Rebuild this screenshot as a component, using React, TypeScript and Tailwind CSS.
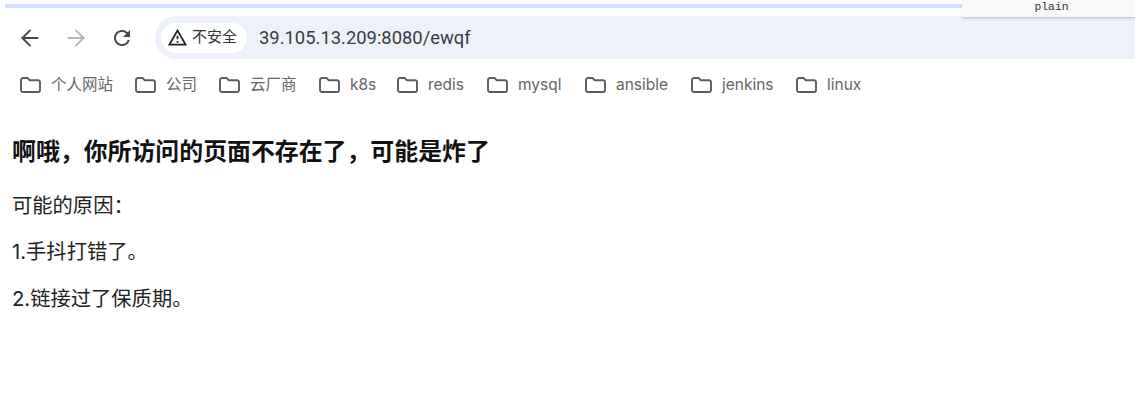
import { ArrowLeft, ArrowRight } from "lucide-react";
import { MdOutlineWarningAmber, MdRefresh } from "react-icons/md";

const bookmarks = [
  { name: "个人网站", width: "w-[115px]" },
  { name: "公司", width: "w-[84px]" },
  { name: "云厂商", width: "w-[100px]" },
  { name: "k8s", width: "w-[78px]" },
  { name: "redis", width: "w-[90px]" },
  { name: "mysql", width: "w-[98px]" },
  { name: "ansible", width: "w-[106px]" },
  { name: "jenkins", width: "w-[105px]" },
  { name: "linux", width: "w-[80px]" },
];

const font = "font-['Inter','Noto_Sans_CJK_SC',sans-serif]";

function FolderIcon() {
  return (
    <svg width="21" height="16" viewBox="0 0 21 16" fill="none" className="shrink-0">
      <path
        d="M1 3a2 2 0 0 1 2-2h4.6l2 2.2H18a2 2 0 0 1 2 2V13a2 2 0 0 1-2 2H3a2 2 0 0 1-2-2Z"
        stroke="#5c5c5c"
        strokeWidth="1.9"
        strokeLinejoin="round"
      />
    </svg>
  );
}

export default function App() {
  return (
    <div className={`relative h-[401px] w-[1135px] overflow-hidden bg-white ${font}`}>
      {/* tab strip remainder */}
      <div className="pt-1 pl-[5px] pr-[173px]">
        <div className="h-1 bg-[#d3e3fd]" />
      </div>

      <div className="relative flex h-[51px] items-center pl-[22px] pt-2">
        <ArrowLeft className="-ml-[5px] h-[26px] w-[26px] text-[#474747]" strokeWidth={1.8} />
        <ArrowRight className="ml-[20px] h-[26px] w-[26px] text-[#b5b7ba]" strokeWidth={1.8} />
        <MdRefresh className="ml-[21px] h-[24px] w-[24px] text-[#474747]" />
        <div className="ml-[21px] flex h-[43px] flex-1 items-center rounded-l-full bg-[#edf2fa] pl-[6px]">
          <div className="flex h-[30px] w-[86px] items-center rounded-full bg-white pl-[6px] text-[15px] text-[#333]">
            <MdOutlineWarningAmber className="h-[21px] w-[21px] text-[#222]" />
            <span className="ml-[4px]">不安全</span>
          </div>
          <span className="ml-[12px] font-['Roboto','Noto_Sans_CJK_SC',sans-serif] text-[18.4px] text-[#3a3c40]">
            39.105.13.209:8080/ewqf
          </span>
        </div>
      </div>

      <div className="flex h-[38px] items-center pl-[20px] pt-[14px]">
        {bookmarks.map((b) => (
          <div key={b.name} className={`flex items-center ${b.width}`}>
            <FolderIcon />
            <span className="ml-[10px] whitespace-nowrap text-[15.5px] text-[#666]">{b.name}</span>
          </div>
        ))}
      </div>

      <div className="pl-[12px] pt-[39px] text-[#222]">
        <h1 className="text-[23.9px] leading-[32px] font-bold text-[#111]">啊哦，你所访问的页面不存在了，可能是炸了</h1>
        <p className="mt-[25px] text-[20.3px] leading-[26px]">可能的原因：</p>
        <p className="mt-[20px] text-[20.3px] leading-[26px]">1.手抖打错了。</p>
        <p className="mt-[21px] text-[20.3px] leading-[26px]">2.链接过了保质期。</p>
      </div>

      {/* overlapping tooltip at the top right */}
      <div className="absolute right-0 top-0 flex h-[18px] w-[173px] items-center justify-center border-b border-[#ccc] bg-[#f8f8f8] pb-[3px] pl-[6px] font-['Liberation_Mono',monospace] text-[11.3px] text-[#333] shadow-sm">
        plain
      </div>
    </div>
  );
}
